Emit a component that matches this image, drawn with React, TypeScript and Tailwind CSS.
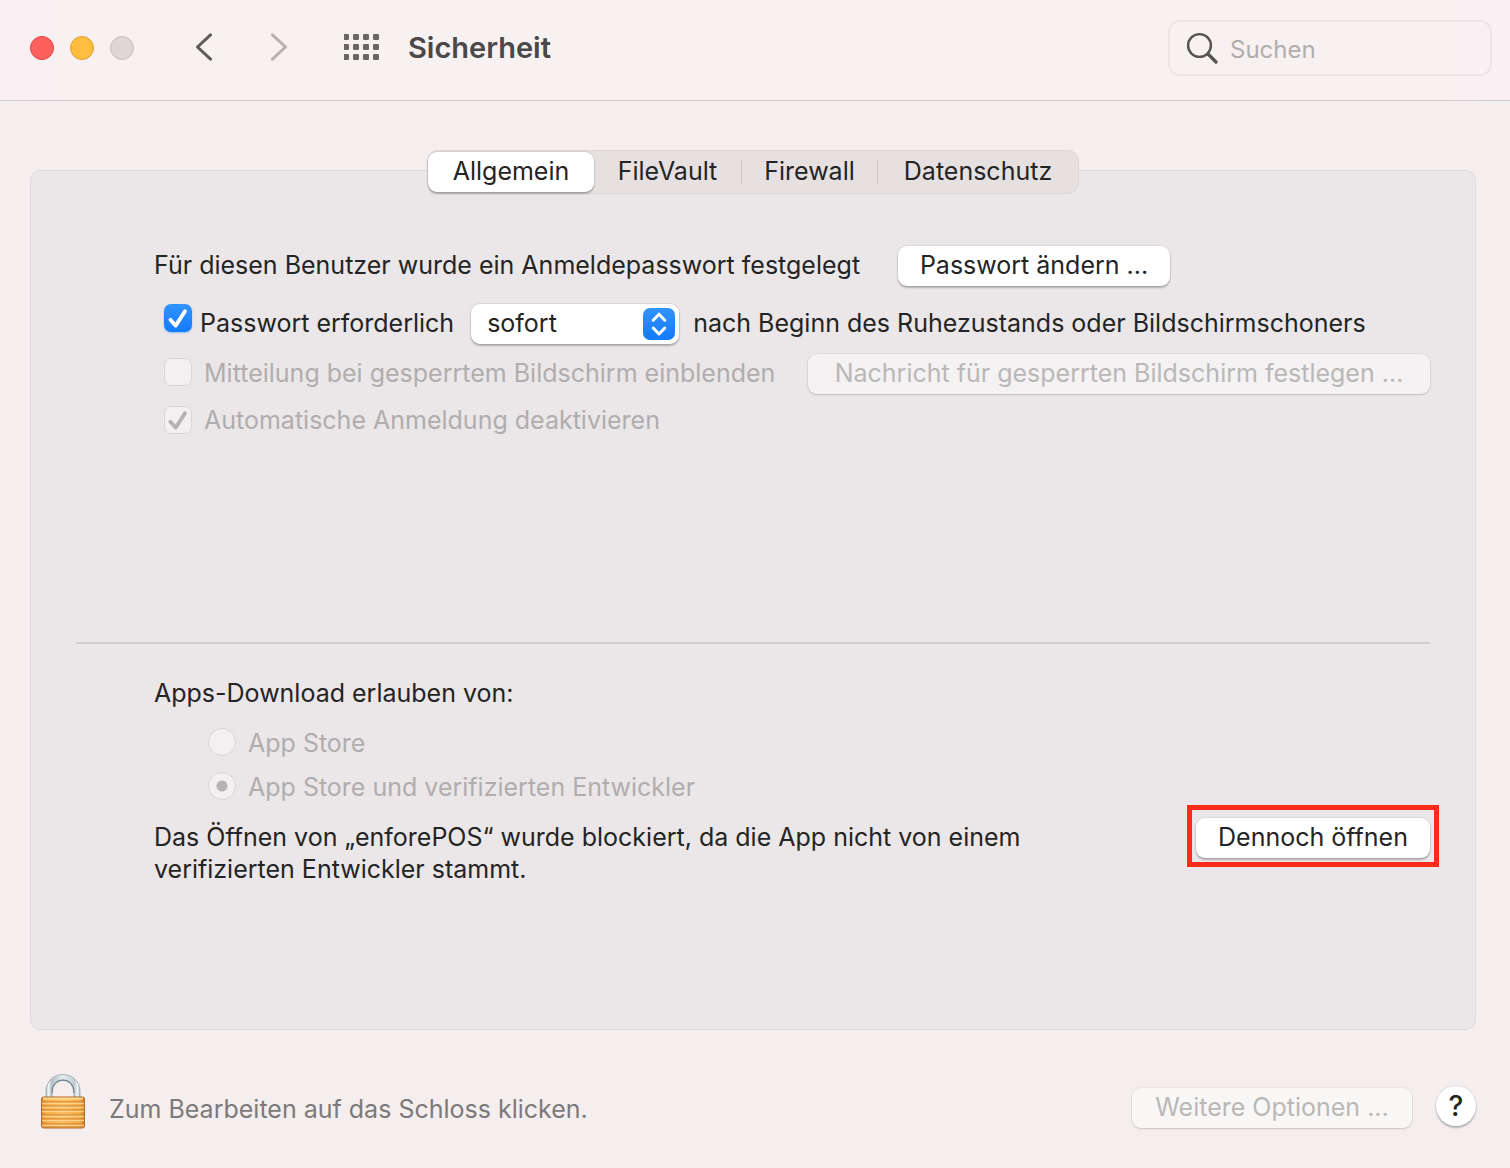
import React from 'react';

const buttonBase = 'h-10 rounded-[9px] pb-0.5 text-[25px] leading-8 whitespace-nowrap text-center';
const buttonActive = 'bg-white text-[#242424] shadow-[0_0_1px_1px_rgba(0,0,0,0.07),0_2px_2px_rgba(0,0,0,0.24)]';
const buttonDisabled = 'text-[#bab7b7] shadow-[0_0_1px_1px_rgba(0,0,0,0.03),0_1px_2px_rgba(0,0,0,0.16)]';

const tabs = [
  { name: 'FileVault', width: 'w-[147px]' },
  { name: 'Firewall', width: 'w-[135px]' },
  { name: 'Datenschutz', width: 'grow' },
];

const Check: React.FC<{ className: string }> = ({ className }) => (
  <svg
    className={`pointer-events-none absolute inset-0 ${className}`}
    viewBox="0 0 28 28"
    fill="none"
    stroke="currentColor"
    strokeWidth="3.8"
    strokeLinecap="round"
    strokeLinejoin="round"
  >
    <path d="M6.4 15.8 L11.7 21.6 L21 7.2" />
  </svg>
);

const Header: React.FC = () => (
  <header className="flex h-[101px] items-center border-b border-[#cfcacb] bg-[linear-gradient(to_right,#faeff3_0,#f8f1f2_60px,#f7f1f1_50%,#f7f1f1_96%,#faeff3_98%)] pr-[18px] pb-1 pl-[30px]">
    <div className="flex gap-4">
      <button aria-label="Schließen" className="size-6 rounded-full border border-[#e2463f] bg-[#ff605c]" />
      <button aria-label="Minimieren" className="size-6 rounded-full border border-[#dfa033] bg-[#ffbd3f]" />
      <button aria-label="Zoomen" className="size-6 rounded-full border border-[#c5bfc0] bg-[#ddd7d8]" />
    </div>
    <nav className="ml-[60px] flex items-center gap-[55px]">
      <button aria-label="Zurück">
        <svg className="h-[30px] w-5 text-[#5f5a5a]" viewBox="0 0 20 30" fill="none" stroke="currentColor" strokeWidth="3" strokeLinecap="round" strokeLinejoin="round">
          <path d="M16.5 1.8 L3.5 14 L16.5 26.2" />
        </svg>
      </button>
      <button aria-label="Vorwärts">
        <svg className="h-[30px] w-5 text-[#b7b2b2]" viewBox="0 0 20 30" fill="none" stroke="currentColor" strokeWidth="3" strokeLinecap="round" strokeLinejoin="round">
          <path d="M3.5 1.8 L16.5 14 L3.5 26.2" />
        </svg>
      </button>
      <button aria-label="Alle einblenden">
        <svg className="h-[28px] w-9 text-[#6b6566]" viewBox="0 0 36 28" fill="currentColor">
          {[0, 10, 20].map((y) =>
            [-1, 9, 19, 29].map((x) => <rect key={`${x}-${y}`} x={x} y={y} width="6" height="6" rx="1.2" />)
          )}
        </svg>
      </button>
    </nav>
    <h1 className="ml-7 text-[29px] leading-8 font-semibold text-[#4a4848]">Sicherheit</h1>
    <label className="ml-auto flex h-14 w-[324px] items-center gap-3 rounded-xl border-2 border-[#ece5e6] pl-4">
      <svg className="size-8 shrink-0 text-[#565252]" viewBox="0 0 32 32" fill="none" stroke="currentColor" strokeLinecap="round">
        <circle cx="13.5" cy="13.5" r="11.4" strokeWidth="2.4" />
        <path d="M22 22 L30 30" strokeWidth="3.2" />
      </svg>
      <input
        type="search"
        aria-label="Suchen"
        placeholder="Suchen"
        className="w-full min-w-0 bg-transparent pt-1 text-[24px] leading-8 outline-none placeholder:text-[#b1adad]"
      />
    </label>
  </header>
);

const Lock: React.FC = () => (
  <svg className="h-[56px] w-11" viewBox="0 0 44 56" fill="none">
    <defs>
      <linearGradient id="brass" x1="0" y1="0" x2="1" y2="0">
        <stop offset="0" stopColor="#d98630" />
        <stop offset="0.1" stopColor="#f2a848" />
        <stop offset="0.5" stopColor="#fbbd60" />
        <stop offset="0.9" stopColor="#f0a543" />
        <stop offset="1" stopColor="#c97524" />
      </linearGradient>
      <linearGradient id="steel" x1="0" y1="0" x2="1" y2="0">
        <stop offset="0" stopColor="#a9b5bc" />
        <stop offset="0.07" stopColor="#f4f8fa" />
        <stop offset="0.16" stopColor="#b5c1c8" />
        <stop offset="0.5" stopColor="#e6edf0" />
        <stop offset="0.84" stopColor="#c1ccd2" />
        <stop offset="0.93" stopColor="#f4f8fa" />
        <stop offset="1" stopColor="#a9b5bc" />
      </linearGradient>
    </defs>
    <path d="M5 24 V17 A17 16.5 0 0 1 39 17 V24 H33 V17 A11 11 0 0 0 11 17 V24 Z" fill="url(#steel)" stroke="#98a3a9" strokeWidth="0.8" />
    <path d="M11.2 19 V17 A10.8 10.8 0 0 1 32.8 17 V19" stroke="#75848c" strokeWidth="1.2" />
    <rect x="0.5" y="23" width="43" height="31" rx="2" fill="url(#brass)" stroke="#b06a2a" />
    <path d="M2 24.6 H42" stroke="#ffdf9c" strokeWidth="1.6" />
    {[28, 32, 36, 41, 45, 50].map((y) => (
      <g key={y}>
        <path d={`M1 ${y} H43`} stroke="#d58a34" strokeOpacity="0.75" strokeWidth="1.3" />
        <path d={`M1 ${y + 1.5} H43`} stroke="#ffd88e" strokeOpacity="0.85" strokeWidth="1.3" />
      </g>
    ))}
    <path d="M2 53 H42" stroke="#d08030" strokeWidth="1.2" />
  </svg>
);

const App: React.FC = () => {
  return (
    <div className="flex min-h-screen flex-col bg-[#f4eeee] font-['Inter','Liberation_Sans',sans-serif] text-[25px] leading-8 text-[#242424]">
      <Header />
      <main className="mt-[49px] mr-[34px] ml-[30px] flex grow flex-col">
        <div role="tablist" className="z-10 mx-auto flex h-11 w-[652px] items-center rounded-[11px] border border-[#ddd8d8] bg-[#e6e0e0] pb-px">
          <button role="tab" aria-selected="true" className={`w-[166px] ${buttonBase} ${buttonActive}`}>
            Allgemein
          </button>
          {tabs.map((tab, i) => (
            <React.Fragment key={tab.name}>
              {i > 0 && <span className="h-6 w-px bg-[#cbc5c5]" />}
              <button role="tab" aria-selected="false" className={`pb-0.5 whitespace-nowrap ${tab.width}`}>
                {tab.name}
              </button>
            </React.Fragment>
          ))}
        </div>

        <section className="-mt-6 flex grow flex-col rounded-[10px] border border-[#e0dbdc] bg-[#ebe7e8] px-[45px] pt-[75px]">
          <div className="flex h-[339px] flex-col pl-[78px]">
            <div className="flex items-center gap-[38px]">
              <p className="pb-0.5 whitespace-nowrap">Für diesen Benutzer wurde ein Anmeldepasswort festgelegt</p>
              <button className={`w-[272px] ${buttonBase} ${buttonActive}`}>Passwort ändern ...</button>
            </div>
            <div className="mt-[18px] flex items-center pl-[10px]">
              <span className="relative mb-3 size-7 shrink-0">
                <input
                  id="require"
                  type="checkbox"
                  defaultChecked
                  className="block size-7 appearance-none rounded-[7px] bg-linear-to-b from-[#3394fc] to-[#127afd] shadow-[0_1px_2px_rgba(18,122,253,0.4)]"
                />
                <Check className="text-white" />
              </span>
              <label htmlFor="require" className="ml-2 pb-0.5 whitespace-nowrap">Passwort erforderlich</label>
              <span className="relative ml-[17px] w-[208px]">
                <select aria-label="Zeitspanne" className={`block h-10 w-full appearance-none rounded-[9px] pb-0.5 pl-4 ${buttonActive}`}>
                  <option>sofort</option>
                </select>
                <svg className="pointer-events-none absolute top-1 right-1 size-8" viewBox="0 0 32 32" fill="none">
                  <defs>
                    <linearGradient id="stepper" x1="0" y1="0" x2="0" y2="1">
                      <stop offset="0" stopColor="#3394fc" />
                      <stop offset="1" stopColor="#127afd" />
                    </linearGradient>
                  </defs>
                  <rect width="32" height="32" rx="7" fill="url(#stepper)" />
                  <path d="M10.2 12.2 L16 6.2 L21.8 12.2 M10.2 20 L16 26 L21.8 20" stroke="#fff" strokeWidth="3" strokeLinecap="round" strokeLinejoin="round" />
                </svg>
              </span>
              <span className="ml-[14px] pb-0.5 whitespace-nowrap">nach Beginn des Ruhezustands oder Bildschirmschoners</span>
            </div>
            <div className="mt-[10px] flex items-center pl-[10px] text-[#b1adae]">
              <input
                id="notice"
                type="checkbox"
                disabled
                className="mb-1 size-7 shrink-0 appearance-none rounded-[7px] border border-[#d9d5d5] bg-[#f3f0f1]"
              />
              <label htmlFor="notice" className="ml-3 pb-0.5 whitespace-nowrap">Mitteilung bei gesperrtem Bildschirm einblenden</label>
              <button disabled className={`ml-auto w-[622px] bg-[#f4f2f3] ${buttonBase} ${buttonDisabled}`}>
                Nachricht für gesperrten Bildschirm festlegen ...
              </button>
            </div>
            <div className="mt-[10px] flex items-center pl-[10px] text-[#b1adae]">
              <span className="relative size-7 shrink-0">
                <input
                  id="autologin"
                  type="checkbox"
                  disabled
                  defaultChecked
                  className="block size-7 appearance-none rounded-[7px] border border-[#d9d5d5] bg-[#f3f0f1]"
                />
                <Check className="text-[#b5b2b2]" />
              </span>
              <label htmlFor="autologin" className="ml-3 whitespace-nowrap">Automatische Anmeldung deaktivieren</label>
            </div>
          </div>

          <div className="mt-[57px] h-0.5 bg-[#d3cfd0]" />

          <div className="mt-[33px] pl-[78px]">
            <fieldset>
              <legend>Apps-Download erlauben von:</legend>
              <div className="mt-[18px] flex h-8 items-center gap-3 pl-[54px] text-[#b1adae]">
                <input id="store" name="source" type="radio" disabled className="mb-0.5 size-7 shrink-0 appearance-none rounded-full border border-[#dbd7d8] bg-[#f3f0f1]" />
                <label htmlFor="store">App Store</label>
              </div>
              <div className="mt-3 flex h-8 items-center gap-3 pl-[54px] text-[#b1adae]">
                <input
                  id="verified"
                  name="source"
                  type="radio"
                  disabled
                  defaultChecked
                  className="mb-0.5 size-7 shrink-0 appearance-none rounded-full border border-[#dbd7d8] bg-[#f3f0f1] bg-[radial-gradient(circle,#b5b2b2_5px,transparent_6px)]"
                />
                <label htmlFor="verified">App Store und verifizierten Entwickler</label>
              </div>
            </fieldset>
            <div className="-mr-[9px] flex items-start justify-between">
              <p className="mt-[18px] max-w-[920px]">
                Das Öffnen von „enforePOS“ wurde blockiert, da die App nicht von einem verifizierten Entwickler stammt.
              </p>
              <div className="mt-0.5 border-[5px] border-[#ff2a1a] px-1 pt-2 pb-1">
                <button className={`block w-[234px] ${buttonBase} ${buttonActive}`}>Dennoch öffnen</button>
              </div>
            </div>
          </div>
        </section>

        <footer className="flex h-[138px] items-center pt-4 pl-[11px]">
          <button aria-label="Schloss" className="pb-[10px]">
            <Lock />
          </button>
          <p className="ml-6 pt-1 text-[#7d7979]">Zum Bearbeiten auf das Schloss klicken.</p>
          <button disabled className={`mt-0.5 ml-auto w-[280px] bg-[#f9f7f6] ${buttonBase} ${buttonDisabled}`}>
            Weitere Optionen ...
          </button>
          <button className={`mb-0.5 ml-6 size-10 rounded-full text-[28px] leading-8 font-medium ${buttonActive}`}>?</button>
        </footer>
      </main>
    </div>
  );
};

export default App;
